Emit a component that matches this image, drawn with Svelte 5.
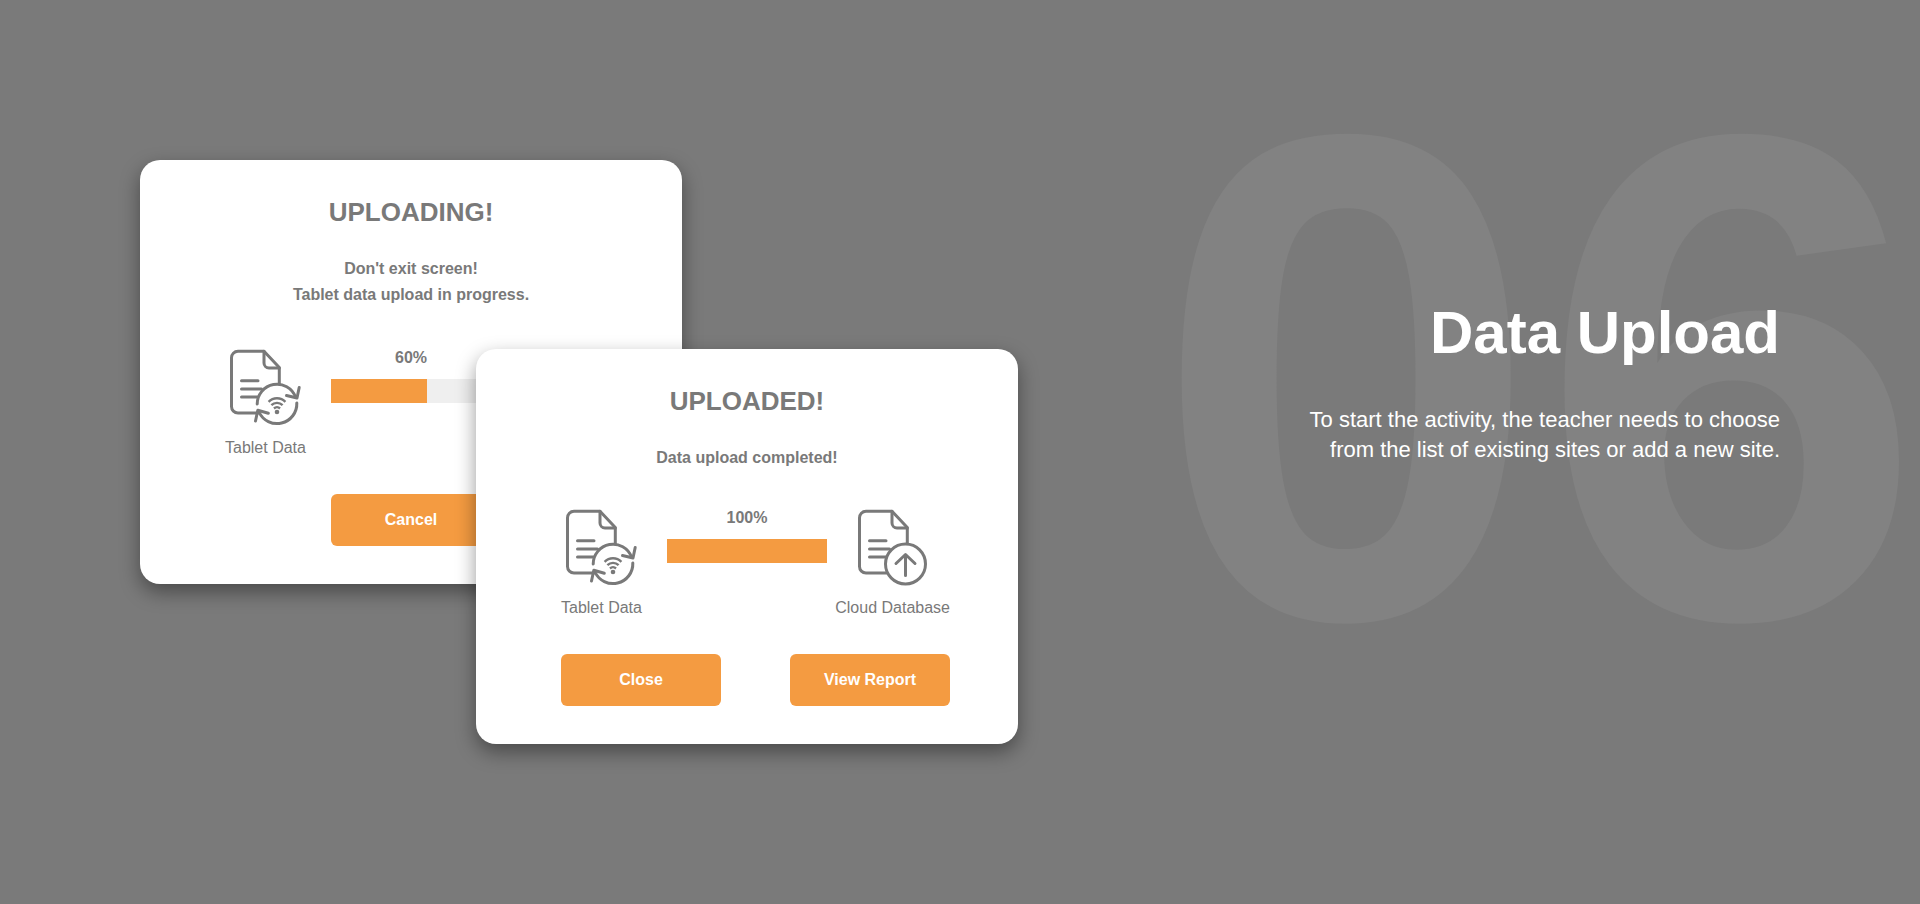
<script>
  const steps = [
    {
      id: 'uploading',
      title: 'UPLOADING!',
      message: ["Don't exit screen!", 'Tablet data upload in progress.'],
      progress: 60,
      cloud: false,
      actions: ['Cancel']
    },
    {
      id: 'uploaded',
      title: 'UPLOADED!',
      message: ['Data upload completed!'],
      progress: 100,
      cloud: true,
      actions: ['Close', 'View Report']
    }
  ];
</script>

{#snippet documentShape()}
  <path d="M36 66H13a6.500 6.500 0 0 1-6.500-6.500V11a6.500 6.500 0 0 1 6.500-6.700H39L54.300 20.500V37.500" />
  <path d="M39 4.300V16a5 5 0 0 0 5 5H54.300" />
  <path d="M16.500 33.700H33M16.500 42H36.500M16.500 50H32.500" />
{/snippet}

<main>
  <section class="dialogs" aria-label="Upload dialogs">
    {#each steps as step (step.id)}
      <article class="card {step.id}">
        <h2>{step.title}</h2>
        <div class="message">
          {#each step.message as line}
            <p>{line}</p>
          {/each}
        </div>
        <div class="transfer">
          <figure>
            <svg viewBox="0 0 80 80" aria-hidden="true">
              {@render documentShape()}
              <circle class="cover" cx="52" cy="57" r="20" />
              <path d="M32.200 57A19.800 19.800 0 0 1 70.500 50" />
              <path d="M71.800 56A19.800 19.800 0 0 1 34 65" />
              <path d="M61.500 48.500L72 51L74.200 40.500" />
              <path d="M43.300 66.300L32.800 63.300L30.500 74" />
              <path class="fine" d="M43.600 54.800a11.800 11.800 0 0 1 16.800 0M46.400 58.200a8 8 0 0 1 11.200 0M49 61.500a4.400 4.400 0 0 1 6 0" />
              <circle class="dot" cx="52" cy="65" r="2.300" />
            </svg>
            <figcaption>Tablet Data</figcaption>
          </figure>
          <div class="meter">
            <span id="{step.id}-value">{step.progress}%</span>
            <div
              class="track"
              role="progressbar"
              aria-labelledby="{step.id}-value"
              aria-valuenow={step.progress}
              aria-valuemin="0"
              aria-valuemax="100"
            >
              <div class="fill" style="width: {step.progress}%"></div>
            </div>
          </div>
          {#if step.cloud}
            <figure class="target">
              <svg viewBox="0 0 80 80" aria-hidden="true">
                {@render documentShape()}
                <circle class="cover ring" cx="52.500" cy="57" r="20" />
                <path d="M52.500 68.500V48M43 56.500L52.500 47.500L62 56.500" />
              </svg>
              <figcaption>Cloud Database</figcaption>
            </figure>
          {/if}
        </div>
        <div class="actions">
          {#each step.actions as action}
            <button type="button">{action}</button>
          {/each}
        </div>
      </article>
    {/each}
  </section>

  <section class="intro">
    <span class="number" aria-hidden="true">06</span>
    <div class="copy">
      <h1>Data Upload</h1>
      <p>To start the activity, the teacher needs to choose<br />from the list of existing sites or add a new site.</p>
    </div>
  </section>
</main>

<style>
  :global(body) {
    background: #7a7a7a;
  }

  main {
    box-sizing: border-box;
    min-height: 100vh;
    padding: 40px 140px;
    display: flex;
    align-items: center;
    justify-content: space-between;
    overflow: hidden;
    color: #797979;
    font-family: "Liberation Sans", Arial, sans-serif;
    font-size: 16px;
  }

  h1,
  h2,
  p,
  figure {
    margin: 0;
  }

  .dialogs {
    display: grid;
    align-items: start;
  }

  .card {
    grid-area: 1 / 1;
    box-sizing: border-box;
    width: 542px;
    padding: 36px 68px 38px 85px;
    border-radius: 20px;
    background: #fff;
    box-shadow: 0 8px 20px rgba(0, 0, 0, 0.4);
  }

  .uploaded {
    margin: 189px 0 0 336px;
  }

  h2,
  .message {
    margin-right: 17px;
    text-align: center;
  }

  h2 {
    font-size: 26px;
    line-height: 32px;
  }

  .message {
    margin-top: 28px;
    margin-bottom: 39px;
    font-weight: bold;
    line-height: 26px;
    white-space: nowrap;
  }

  .uploaded .message {
    margin-bottom: 36px;
  }

  .transfer {
    display: grid;
    grid-template-columns: 106px 160px 1fr;
    align-items: start;
  }

  figure {
    display: flex;
    flex-direction: column;
    align-items: center;
    gap: 10px;
    justify-self: start;
    line-height: 22px;
    white-space: nowrap;
  }

  .target {
    justify-self: end;
  }

  svg {
    width: 80px;
    height: 80px;
    fill: none;
    stroke: #797979;
    stroke-width: 3;
    stroke-linecap: round;
    stroke-linejoin: round;
  }

  .cover {
    fill: #fff;
    stroke: none;
  }

  .ring {
    stroke: #797979;
  }

  .fine {
    stroke-width: 2.4;
    stroke-linecap: butt;
  }

  .dot {
    fill: #797979;
    stroke: none;
  }

  .meter {
    display: flex;
    flex-direction: column;
    gap: 10px;
    text-align: center;
    font-weight: bold;
    line-height: 22px;
  }

  .track {
    height: 24px;
    background: #efefef;
  }

  .fill {
    height: 100%;
    background: #f49b41;
  }

  .actions {
    display: flex;
    justify-content: space-between;
    margin-top: 35px;
  }

  .uploading .actions {
    justify-content: center;
    margin-right: 17px;
  }

  button {
    width: 160px;
    height: 52px;
    padding: 0;
    border: 0;
    border-radius: 6px;
    background: #f49b41;
    color: #fff;
    font: bold 16px "Liberation Sans", Arial, sans-serif;
    cursor: pointer;
  }

  .intro {
    display: grid;
    align-items: center;
    justify-items: end;
    margin-bottom: 148px;
    color: #fff;
    text-align: right;
  }

  .number {
    grid-area: 1 / 1;
    margin-right: -144px;
    color: #828282;
    font-size: 692px;
    font-weight: bold;
    line-height: 500px;
  }

  .copy {
    grid-area: 1 / 1;
    z-index: 1;
    padding-top: 6px;
  }

  h1 {
    margin-bottom: 36px;
    font-size: 60px;
    line-height: 72px;
  }

  .copy p {
    font-size: 22px;
    line-height: 30px;
    white-space: nowrap;
  }
</style>
